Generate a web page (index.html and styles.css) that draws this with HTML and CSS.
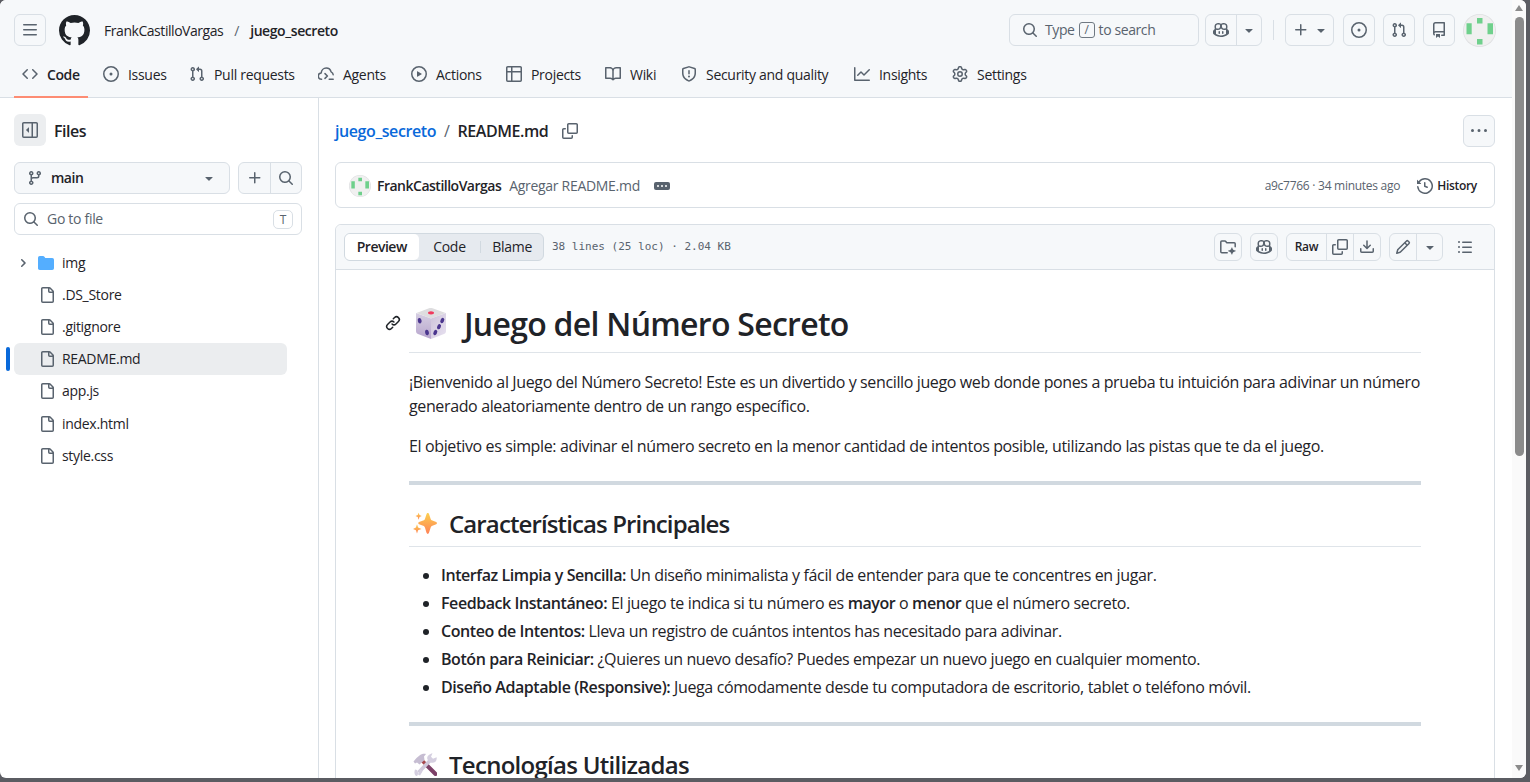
FILE: index.html
```html
<!DOCTYPE html>
<html lang="es">
<head>
  <meta charset="UTF-8">
  <meta name="viewport" content="width=device-width, initial-scale=1.0">
  <title>juego_secreto/README.md</title>
  <link rel="stylesheet" href="styles.css">
</head>
<body>

<!-- icon sprite -->
<svg class="sprite" xmlns="http://www.w3.org/2000/svg">
  <symbol id="i-menu" viewBox="0 0 16 16"><path d="M1 2.75A.75.75 0 0 1 1.75 2h12.5a.75.75 0 0 1 0 1.5H1.75A.75.75 0 0 1 1 2.75Zm0 5A.75.75 0 0 1 1.75 7h12.5a.75.75 0 0 1 0 1.5H1.75A.75.75 0 0 1 1 7.75ZM1.75 12h12.5a.75.75 0 0 1 0 1.5H1.75a.75.75 0 0 1 0-1.5Z"/></symbol>
  <symbol id="i-github" viewBox="0 0 16 16"><path d="M8 0c4.42 0 8 3.58 8 8a8.013 8.013 0 0 1-5.45 7.59c-.4.08-.55-.17-.55-.38 0-.27.01-1.13.01-2.2 0-.75-.25-1.23-.54-1.48 1.78-.2 3.65-.88 3.65-3.95 0-.88-.31-1.59-.82-2.15.08-.2.36-1.02-.08-2.12 0 0-.67-.22-2.2.82-.64-.18-1.32-.27-2-.27-.68 0-1.36.09-2 .27-1.53-1.03-2.2-.82-2.2-.82-.44 1.1-.16 1.92-.08 2.12-.51.56-.82 1.28-.82 2.15 0 3.06 1.86 3.75 3.64 3.95-.23.2-.44.55-.51 1.07-.46.21-1.61.55-2.33-.66-.15-.24-.6-.83-1.23-.82-.67.01-.27.38.01.53.34.19.73.9.82 1.13.16.45.68 1.31 2.69.94 0 .67.01 1.3.01 1.49 0 .21-.15.45-.55.38A7.995 7.995 0 0 1 0 8c0-4.42 3.58-8 8-8Z"/></symbol>
  <symbol id="i-code" viewBox="0 0 16 16"><path d="m11.28 3.22 4.25 4.25a.75.75 0 0 1 0 1.06l-4.25 4.25a.749.749 0 0 1-1.275-.326.749.749 0 0 1 .215-.734L13.94 8l-3.72-3.72a.749.749 0 0 1 .326-1.275.749.749 0 0 1 .734.215Zm-6.56 0a.751.751 0 0 1 1.042.018.751.751 0 0 1 .018 1.042L2.06 8l3.72 3.72a.749.749 0 0 1-.326 1.275.749.749 0 0 1-.734-.215L.47 8.53a.75.75 0 0 1 0-1.06Z"/></symbol>
  <symbol id="i-issue" viewBox="0 0 16 16"><path d="M8 9.5a1.5 1.5 0 1 0 0-3 1.5 1.5 0 0 0 0 3Z"/><path d="M8 0a8 8 0 1 1 0 16A8 8 0 0 1 8 0ZM1.5 8a6.5 6.5 0 1 0 13 0 6.5 6.5 0 0 0-13 0Z"/></symbol>
  <symbol id="i-pr" viewBox="0 0 16 16"><path d="M1.5 3.25a2.25 2.25 0 1 1 3 2.122v5.256a2.251 2.251 0 1 1-1.5 0V5.372A2.25 2.25 0 0 1 1.5 3.25Zm5.677-.177L9.573.677A.25.25 0 0 1 10 .854V2.5h1A2.5 2.5 0 0 1 13.5 5v5.628a2.251 2.251 0 1 1-1.5 0V5a1 1 0 0 0-1-1h-1v1.646a.25.25 0 0 1-.427.177L7.177 3.427a.25.25 0 0 1 0-.354ZM3.75 2.5a.75.75 0 1 0 0 1.5.75.75 0 0 0 0-1.5Zm0 9.5a.75.75 0 1 0 0 1.5.75.75 0 0 0 0-1.5Zm8.25.75a.75.75 0 1 0 1.5 0 .75.75 0 0 0-1.5 0Z"/></symbol>
  <symbol id="i-agents" viewBox="0 0 16 16"><path d="M3.6 13.2A3.1 3.1 0 0 1 3.2 7C3.4 4.2 5.5 2 8.2 2c2.4 0 4.3 1.6 4.9 3.9 1.2.5 2 1.5 2.1 2.9M7 7.6l2.4 2.4L7 12.4M11.2 13.2h4" fill="none" stroke="currentColor" stroke-width="1.5" stroke-linecap="round" stroke-linejoin="round"/></symbol>
  <symbol id="i-play" viewBox="0 0 16 16"><path d="M8 0a8 8 0 1 1 0 16A8 8 0 0 1 8 0ZM1.5 8a6.5 6.5 0 1 0 13 0 6.5 6.5 0 0 0-13 0Zm4.879-2.773 4.264 2.559a.25.25 0 0 1 0 .428l-4.264 2.559A.25.25 0 0 1 6 10.559V5.442a.25.25 0 0 1 .379-.215Z"/></symbol>
  <symbol id="i-table" viewBox="0 0 16 16"><path d="M0 1.75C0 .784.784 0 1.75 0h12.5C15.216 0 16 .784 16 1.75v12.5A1.75 1.75 0 0 1 14.25 16H1.75A1.75 1.75 0 0 1 0 14.25ZM6.5 6.5v8h7.75a.25.25 0 0 0 .25-.25V6.5Zm8-1.5V1.75a.25.25 0 0 0-.25-.25H6.5V5Zm-13 1.5v7.75c0 .138.112.25.25.25H5v-8ZM5 5V1.5H1.75a.25.25 0 0 0-.25.25V5Z"/></symbol>
  <symbol id="i-book" viewBox="0 0 16 16"><path d="M0 1.75A.75.75 0 0 1 .75 1h4.253c1.227 0 2.317.59 3 1.501A3.743 3.743 0 0 1 11.006 1h4.245a.75.75 0 0 1 .75.75v10.5a.75.75 0 0 1-.75.75h-4.507a2.25 2.25 0 0 0-1.591.659l-.622.621a.75.75 0 0 1-1.06 0l-.622-.621A2.25 2.25 0 0 0 5.258 13H.75a.75.75 0 0 1-.75-.75Zm7.251 10.324.004-5.073-.002-2.253A2.25 2.25 0 0 0 5.003 2.5H1.5v9h3.757a3.75 3.75 0 0 1 1.994.574ZM8.755 4.75l-.004 7.322a3.752 3.752 0 0 1 1.992-.572H14.5v-9h-3.495a2.25 2.25 0 0 0-2.25 2.25Z"/></symbol>
  <symbol id="i-shield" viewBox="0 0 16 16"><path d="M7.467.133a1.748 1.748 0 0 1 1.066 0l5.25 1.68A1.75 1.75 0 0 1 15 3.48V7c0 1.566-.32 3.182-1.303 4.682-.983 1.498-2.585 2.813-5.032 3.855a1.697 1.697 0 0 1-1.33 0c-2.447-1.042-4.049-2.357-5.032-3.855C1.32 10.182 1 8.566 1 7V3.48a1.75 1.75 0 0 1 1.217-1.667Zm.61 1.429a.25.25 0 0 0-.153 0l-5.25 1.68a.25.25 0 0 0-.174.238V7c0 1.358.275 2.666 1.057 3.86.784 1.194 2.121 2.34 4.366 3.297a.196.196 0 0 0 .154 0c2.245-.956 3.582-2.104 4.366-3.298C13.225 9.666 13.5 8.36 13.5 7V3.48a.251.251 0 0 0-.174-.237l-5.25-1.68ZM8.75 4.75v3a.75.75 0 0 1-1.5 0v-3a.75.75 0 0 1 1.5 0ZM9 10.5a1 1 0 1 1-2 0 1 1 0 0 1 2 0Z"/></symbol>
  <symbol id="i-graph" viewBox="0 0 16 16"><path d="M1.5 1.75V13.5h13.75a.75.75 0 0 1 0 1.5H.75a.75.75 0 0 1-.75-.75V1.75a.75.75 0 0 1 1.5 0Zm14.28 2.53-5.25 5.25a.75.75 0 0 1-1.06 0L7 7.06 4.28 9.78a.751.751 0 0 1-1.042-.018.751.751 0 0 1-.018-1.042l3.25-3.25a.75.75 0 0 1 1.06 0L10 7.94l4.72-4.72a.751.751 0 0 1 1.042.018.751.751 0 0 1 .018 1.042Z"/></symbol>
  <symbol id="i-gear" viewBox="0 0 16 16"><path d="M8 0a8.2 8.2 0 0 1 .701.031C9.444.095 9.99.645 10.16 1.29l.288 1.107c.018.066.079.158.212.224.231.114.454.243.668.386.123.082.233.09.299.071l1.103-.303c.644-.176 1.392.021 1.82.63.27.385.506.792.704 1.218.315.675.111 1.422-.364 1.891l-.814.806c-.049.048-.098.147-.088.294.016.257.016.515 0 .772-.01.147.038.246.088.294l.814.806c.475.469.679 1.216.364 1.891a7.977 7.977 0 0 1-.704 1.217c-.428.61-1.176.807-1.82.63l-1.102-.302c-.067-.019-.177-.011-.3.071a5.909 5.909 0 0 1-.668.386c-.133.066-.194.158-.211.224l-.29 1.106c-.168.646-.715 1.196-1.458 1.26a8.006 8.006 0 0 1-1.402 0c-.743-.064-1.289-.614-1.458-1.26l-.289-1.106c-.018-.066-.079-.158-.212-.224a5.738 5.738 0 0 1-.668-.386c-.123-.082-.233-.09-.299-.071l-1.103.303c-.644.176-1.392-.021-1.82-.63a8.12 8.12 0 0 1-.704-1.218c-.315-.675-.111-1.422.363-1.891l.815-.806c.05-.048.098-.147.088-.294a6.214 6.214 0 0 1 0-.772c.01-.147-.038-.246-.088-.294l-.815-.806C.635 6.045.431 5.298.746 4.623a7.92 7.92 0 0 1 .704-1.217c.428-.61 1.176-.807 1.82-.63l1.102.302c.067.019.177.011.3-.071.214-.143.437-.272.668-.386.133-.066.194-.158.211-.224l.29-1.106C6.009.645 6.556.095 7.299.03 7.53.01 7.764 0 8 0Zm-.571 1.525c-.036.003-.108.036-.137.146l-.289 1.105c-.147.561-.549.967-.998 1.189-.173.086-.34.183-.5.29-.417.278-.97.423-1.529.27l-1.103-.303c-.109-.03-.175.016-.195.045-.22.312-.412.644-.573.99-.014.031-.021.11.059.19l.815.806c.411.406.562.957.53 1.456a4.709 4.709 0 0 0 0 .582c.032.499-.119 1.05-.53 1.456l-.815.806c-.081.08-.073.159-.059.19.162.346.353.677.573.989.02.03.085.076.195.046l1.102-.303c.56-.153 1.113-.008 1.53.27.161.107.328.204.501.29.447.222.85.629.997 1.189l.289 1.105c.029.109.101.143.137.146a6.6 6.6 0 0 0 1.142 0c.036-.003.108-.036.137-.146l.289-1.105c.147-.561.549-.967.998-1.189.173-.086.34-.183.5-.29.417-.278.97-.423 1.529-.27l1.103.303c.109.029.175-.016.195-.045.22-.313.411-.644.573-.99.014-.031.021-.11-.059-.19l-.815-.806c-.411-.406-.562-.957-.53-1.456a4.709 4.709 0 0 0 0-.582c-.032-.499.119-1.05.53-1.456l.815-.806c.081-.08.073-.159.059-.19a6.464 6.464 0 0 0-.573-.989c-.02-.03-.085-.076-.195-.046l-1.102.303c-.56.153-1.113.008-1.53-.27a4.44 4.44 0 0 0-.501-.29c-.447-.222-.85-.629-.997-1.189l-.289-1.105c-.029-.11-.101-.143-.137-.146a6.6 6.6 0 0 0-1.142 0ZM11 8a3 3 0 1 1-6 0 3 3 0 0 1 6 0ZM9.5 8a1.5 1.5 0 1 0-3.001.001A1.5 1.5 0 0 0 9.5 8Z"/></symbol>
  <symbol id="i-search" viewBox="0 0 16 16"><path d="M10.68 11.74a6 6 0 0 1-7.922-8.982 6 6 0 0 1 8.982 7.922l3.04 3.04a.749.749 0 0 1-.326 1.275.749.749 0 0 1-.734-.215ZM11.5 7a4.499 4.499 0 1 0-8.997 0A4.499 4.499 0 0 0 11.5 7Z"/></symbol>
  <symbol id="i-copilot" viewBox="0 0 16 16"><path d="M7.998 15.035c-4.562 0-7.873-2.914-7.998-3.749V9.338c.085-.628.677-1.686 1.588-2.065.013-.07.024-.143.036-.218.029-.183.06-.384.126-.612-.201-.508-.254-1.084-.254-1.656 0-.87.128-1.769.693-2.484.579-.733 1.494-1.124 2.724-1.261 1.206-.134 2.262.034 2.944.765.05.053.096.108.139.165.044-.057.094-.112.143-.165.682-.731 1.738-.899 2.944-.765 1.23.137 2.145.528 2.724 1.261.566.715.693 1.614.693 2.484 0 .572-.053 1.148-.254 1.656.066.228.098.429.126.612.012.076.024.148.037.218.924.385 1.522 1.471 1.591 2.095v1.872c0 .766-3.351 3.795-8.002 3.795Zm0-1.485c2.28 0 4.584-1.11 5.002-1.433V7.862l-.023-.116c-.49.21-1.075.291-1.727.291-1.146 0-2.059-.327-2.71-.991A3.222 3.222 0 0 1 8 6.303a3.24 3.24 0 0 1-.544.743c-.65.664-1.563.991-2.71.991-.652 0-1.236-.081-1.727-.291l-.023.116v4.255c.419.323 2.722 1.433 5.002 1.433ZM6.762 2.83c-.193-.206-.637-.413-1.682-.297-1.019.113-1.479.404-1.713.7-.247.312-.369.789-.369 1.554 0 .793.129 1.171.308 1.371.162.181.519.379 1.442.379.853 0 1.339-.235 1.638-.54.315-.322.527-.827.617-1.553.117-.935-.037-1.395-.241-1.614Zm4.155-.297c-1.044-.116-1.488.091-1.681.297-.204.219-.359.679-.242 1.614.091.726.303 1.231.618 1.553.299.305.784.54 1.638.54.922 0 1.28-.198 1.442-.379.179-.2.308-.578.308-1.371 0-.765-.123-1.242-.37-1.554-.233-.296-.693-.587-1.713-.7Z"/><path d="M6.25 9.037a.75.75 0 0 1 .75.75v1.501a.75.75 0 0 1-1.5 0V9.787a.75.75 0 0 1 .75-.75Zm4.25.75v1.501a.75.75 0 0 1-1.5 0V9.787a.75.75 0 0 1 1.5 0Z"/></symbol>
  <symbol id="i-down" viewBox="0 0 16 16"><path d="m4.427 7.427 3.396 3.396a.25.25 0 0 0 .354 0l3.396-3.396A.25.25 0 0 0 11.396 7H4.604a.25.25 0 0 0-.177.427Z"/></symbol>
  <symbol id="i-plus" viewBox="0 0 16 16"><path d="M7.75 2a.75.75 0 0 1 .75.75V7h4.25a.75.75 0 0 1 0 1.5H8.5v4.25a.75.75 0 0 1-1.5 0V8.5H2.75a.75.75 0 0 1 0-1.5H7V2.75A.75.75 0 0 1 7.75 2Z"/></symbol>
  <symbol id="i-repo" viewBox="0 0 16 16"><path d="M2 2.5A2.5 2.5 0 0 1 4.5 0h8.75a.75.75 0 0 1 .75.75v12.5a.75.75 0 0 1-.75.75h-2.5a.75.75 0 0 1 0-1.5h1.75v-2h-8a1 1 0 0 0-.714 1.7.75.75 0 1 1-1.072 1.05A2.495 2.495 0 0 1 2 11.5Zm10.5-1h-8a1 1 0 0 0-1 1v6.708A2.486 2.486 0 0 1 4.5 9h8ZM5 12.25a.25.25 0 0 1 .25-.25h3.5a.25.25 0 0 1 .25.25v3.25a.25.25 0 0 1-.4.2l-1.45-1.087a.249.249 0 0 0-.3 0L5.4 15.7a.25.25 0 0 1-.4-.2Z"/></symbol>
  <symbol id="i-sidebar" viewBox="0 0 16 16"><path d="m4.177 7.823 2.396-2.396A.25.25 0 0 1 7 5.604v4.792a.25.25 0 0 1-.427.177L4.177 8.177a.25.25 0 0 1 0-.354Z"/><path d="M0 1.75C0 .784.784 0 1.75 0h12.5C15.216 0 16 .784 16 1.75v12.5A1.75 1.75 0 0 1 14.25 16H1.75A1.75 1.75 0 0 1 0 14.25Zm1.75-.25a.25.25 0 0 0-.25.25v12.5c0 .138.112.25.25.25H9.5v-13Zm12.5 13a.25.25 0 0 0 .25-.25V1.75a.25.25 0 0 0-.25-.25H11v13Z"/></symbol>
  <symbol id="i-branch" viewBox="0 0 16 16"><path d="M9.5 3.25a2.25 2.25 0 1 1 3 2.122V6A2.5 2.5 0 0 1 10 8.5H6a1 1 0 0 0-1 1v1.128a2.251 2.251 0 1 1-1.5 0V5.372a2.25 2.25 0 1 1 1.5 0v1.836A2.493 2.493 0 0 1 6 7h4a1 1 0 0 0 1-1v-.628A2.25 2.25 0 0 1 9.5 3.25Zm-6 0a.75.75 0 1 0 1.5 0 .75.75 0 0 0-1.5 0Zm8.25-.75a.75.75 0 1 0 0 1.5.75.75 0 0 0 0-1.5ZM4.25 12a.75.75 0 1 0 0 1.5.75.75 0 0 0 0-1.5Z"/></symbol>
  <symbol id="i-chevron" viewBox="0 0 12 12"><path d="M4.7 10c-.2 0-.4-.1-.5-.2-.3-.3-.3-.8 0-1.1L6.9 6 4.2 3.3c-.3-.3-.3-.8 0-1.1.3-.3.8-.3 1.1 0l3.3 3.2c.3.3.3.8 0 1.1L5.3 9.7c-.2.2-.4.3-.6.3Z"/></symbol>
  <symbol id="i-folder" viewBox="0 0 16 16"><path d="M1.75 1A1.75 1.75 0 0 0 0 2.75v10.5C0 14.216.784 15 1.75 15h12.5A1.75 1.75 0 0 0 16 13.25v-8.5A1.75 1.75 0 0 0 14.25 3H7.5a.25.25 0 0 1-.2-.1l-.9-1.2C6.07 1.26 5.55 1 5 1H1.75Z"/></symbol>
  <symbol id="i-file" viewBox="0 0 16 16"><path d="M2 1.75C2 .784 2.784 0 3.75 0h6.586c.464 0 .909.184 1.237.513l2.914 2.914c.329.328.513.773.513 1.237v9.586A1.75 1.75 0 0 1 13.25 16h-9.5A1.75 1.75 0 0 1 2 14.25Zm1.75-.25a.25.25 0 0 0-.25.25v12.5c0 .138.112.25.25.25h9.5a.25.25 0 0 0 .25-.25V6h-2.75A1.75 1.75 0 0 1 9 4.25V1.5Zm6.75.062V4.25c0 .138.112.25.25.25h2.688l-.011-.013-2.914-2.914-.013-.011Z"/></symbol>
  <symbol id="i-copy" viewBox="0 0 16 16"><path d="M0 6.75C0 5.784.784 5 1.75 5h1.5a.75.75 0 0 1 0 1.5h-1.5a.25.25 0 0 0-.25.25v7.5c0 .138.112.25.25.25h7.5a.25.25 0 0 0 .25-.25v-1.5a.75.75 0 0 1 1.5 0v1.5A1.75 1.75 0 0 1 9.25 16h-7.5A1.75 1.75 0 0 1 0 14.25Z"/><path d="M5 1.75C5 .784 5.784 0 6.75 0h7.5C15.216 0 16 .784 16 1.75v7.5A1.75 1.75 0 0 1 14.25 11h-7.5A1.75 1.75 0 0 1 5 9.25Zm1.75-.25a.25.25 0 0 0-.25.25v7.5c0 .138.112.25.25.25h7.5a.25.25 0 0 0 .25-.25v-7.5a.25.25 0 0 0-.25-.25Z"/></symbol>
  <symbol id="i-kebab" viewBox="0 0 16 16"><path d="M8 9a1.5 1.5 0 1 0 0-3 1.5 1.5 0 0 0 0 3ZM1.5 9a1.5 1.5 0 1 0 0-3 1.5 1.5 0 0 0 0 3Zm13 0a1.5 1.5 0 1 0 0-3 1.5 1.5 0 0 0 0 3Z"/></symbol>
  <symbol id="i-history" viewBox="0 0 16 16"><path d="m.427 1.927 1.215 1.215a8.002 8.002 0 1 1-1.6 5.685.75.75 0 1 1 1.493-.154 6.5 6.5 0 1 0 1.18-4.458l1.358 1.358A.25.25 0 0 1 3.896 6H.25A.25.25 0 0 1 0 5.75V2.104a.25.25 0 0 1 .427-.177ZM7.75 4a.75.75 0 0 1 .75.75v2.992l2.028.812a.75.75 0 0 1-.557 1.392l-2.5-1A.751.751 0 0 1 7 8.25v-3.5A.75.75 0 0 1 7.75 4Z"/></symbol>
  <symbol id="i-space" viewBox="0 0 16 16"><path d="M7.2 13.8H1.8c-.6 0-1-.4-1-1V3c0-.6.4-1 1-1h3.1c.4 0 .7.2.9.5l.8 1.2h7.6c.6 0 1 .4 1 1v3" fill="none" stroke="currentColor" stroke-width="1.5" stroke-linecap="round" stroke-linejoin="round"/><path d="M12.2 8.4c.5 2 1.2 2.7 3.4 3.2v.6c-2.2.5-2.9 1.2-3.4 3.4h-.6c-.5-2.2-1.2-2.9-3.4-3.4v-.6c2.2-.5 2.9-1.2 3.4-3.2z"/></symbol>
  <symbol id="i-download" viewBox="0 0 16 16"><path d="M2.75 14A1.75 1.75 0 0 1 1 12.25v-2.5a.75.75 0 0 1 1.5 0v2.5c0 .138.112.25.25.25h10.5a.25.25 0 0 0 .25-.25v-2.5a.75.75 0 0 1 1.5 0v2.5A1.75 1.75 0 0 1 13.25 14Z"/><path d="M7.25 7.689V2a.75.75 0 0 1 1.5 0v5.689l1.97-1.969a.749.749 0 1 1 1.06 1.06l-3.25 3.25a.749.749 0 0 1-1.06 0L4.22 6.78a.749.749 0 1 1 1.06-1.06l1.97 1.969Z"/></symbol>
  <symbol id="i-pencil" viewBox="0 0 16 16"><path d="M11.013 1.427a1.75 1.75 0 0 1 2.474 0l1.086 1.086a1.75 1.75 0 0 1 0 2.474l-8.61 8.61c-.21.21-.47.364-.756.445l-3.251.93a.75.75 0 0 1-.927-.928l.929-3.25c.081-.286.235-.547.445-.758l8.61-8.61Zm.176 4.823L9.75 4.81l-6.286 6.287a.253.253 0 0 0-.064.108l-.558 1.953 1.953-.558a.253.253 0 0 0 .108-.064Zm1.238-3.763a.25.25 0 0 0-.354 0L10.811 3.75l1.439 1.44 1.263-1.263a.25.25 0 0 0 0-.354Z"/></symbol>
  <symbol id="i-list" viewBox="0 0 16 16"><path d="M5.75 2.5h8.5a.75.75 0 0 1 0 1.5h-8.5a.75.75 0 0 1 0-1.5Zm0 5h8.5a.75.75 0 0 1 0 1.5h-8.5a.75.75 0 0 1 0-1.5Zm0 5h8.5a.75.75 0 0 1 0 1.5h-8.5a.75.75 0 0 1 0-1.5ZM2 14a1 1 0 1 1 0-2 1 1 0 0 1 0 2Zm1-6a1 1 0 1 1-2 0 1 1 0 0 1 2 0ZM2 4a1 1 0 1 1 0-2 1 1 0 0 1 0 2Z"/></symbol>
  <symbol id="i-link" viewBox="0 0 16 16"><path d="m7.775 3.275 1.25-1.25a3.5 3.5 0 1 1 4.95 4.95l-2.5 2.5a3.5 3.5 0 0 1-4.95 0 .751.751 0 0 1 .018-1.042.751.751 0 0 1 1.042-.018 1.998 1.998 0 0 0 2.83 0l2.5-2.5a2.002 2.002 0 0 0-2.83-2.83l-1.25 1.25a.751.751 0 0 1-1.042-.018.751.751 0 0 1-.018-1.042Zm-4.69 9.64a1.998 1.998 0 0 0 2.83 0l1.25-1.25a.751.751 0 0 1 1.042.018.751.751 0 0 1 .018 1.042l-1.25 1.25a3.5 3.5 0 1 1-4.95-4.95l2.5-2.5a3.5 3.5 0 0 1 4.95 0 .751.751 0 0 1-.018 1.042.751.751 0 0 1-1.042.018 1.998 1.998 0 0 0-2.83 0l-2.5 2.5a1.998 1.998 0 0 0 0 2.83Z"/></symbol>
  <symbol id="i-avatar" viewBox="0 0 33 33"><circle cx="16.5" cy="16.5" r="16.5" fill="#dfe0e2"/><circle cx="16.5" cy="16.5" r="15.7" fill="#f0f0f0"/><path d="M14 4h5.5v5.5H14zM14 25h5.500v5.500H14zM3.500 9.300h5.200v11H3.500zM24.500 9.300h5.500v11h-5.500z" fill="#6fd08c"/></symbol>
</svg>

<div class="window">
  <div class="page">
    <header class="header">
      <div class="topbar">
        <button class="btn square menu"><svg class="icon"><use href="#i-menu"/></svg></button>
        <svg class="logo"><use href="#i-github"/></svg>
        <div class="context">
          <span class="owner">FrankCastilloVargas</span>
          <span class="slash">/</span>
          <b class="repo">juego_secreto</b>
        </div>
        <div class="actions">
          <div class="btn searchbox">
            <svg class="icon"><use href="#i-search"/></svg>
            <span>Type</span><kbd>/</kbd><span>to search</span>
          </div>
          <div class="btn split copilot">
            <span><svg class="icon"><use href="#i-copilot"/></svg></span>
            <span><svg class="icon"><use href="#i-down"/></svg></span>
          </div>
          <i class="divider"></i>
          <button class="btn create"><svg class="icon"><use href="#i-plus"/></svg><svg class="icon"><use href="#i-down"/></svg></button>
          <button class="btn square"><svg class="icon"><use href="#i-issue"/></svg></button>
          <button class="btn square"><svg class="icon"><use href="#i-pr"/></svg></button>
          <button class="btn square"><svg class="icon"><use href="#i-repo"/></svg></button>
          <svg class="avatar"><use href="#i-avatar"/></svg>
        </div>
      </div>
      <nav class="tabs">
        <a class="tab active"><svg class="icon"><use href="#i-code"/></svg><span>Code</span></a>
        <a class="tab"><svg class="icon"><use href="#i-issue"/></svg><span>Issues</span></a>
        <a class="tab"><svg class="icon"><use href="#i-pr"/></svg><span>Pull requests</span></a>
        <a class="tab"><svg class="icon"><use href="#i-agents"/></svg><span>Agents</span></a>
        <a class="tab"><svg class="icon"><use href="#i-play"/></svg><span>Actions</span></a>
        <a class="tab"><svg class="icon"><use href="#i-table"/></svg><span>Projects</span></a>
        <a class="tab"><svg class="icon"><use href="#i-book"/></svg><span>Wiki</span></a>
        <a class="tab"><svg class="icon"><use href="#i-shield"/></svg><span>Security and quality</span></a>
        <a class="tab"><svg class="icon"><use href="#i-graph"/></svg><span>Insights</span></a>
        <a class="tab"><svg class="icon"><use href="#i-gear"/></svg><span>Settings</span></a>
      </nav>
    </header>

    <div class="layout">
      <aside class="sidebar">
        <div class="files-head">
          <button class="collapse"><svg class="icon"><use href="#i-sidebar"/></svg></button>
          <h2>Files</h2>
        </div>
        <div class="branch-row">
          <button class="btn branch">
            <svg class="icon"><use href="#i-branch"/></svg>
            <b>main</b>
            <svg class="icon caret"><use href="#i-down"/></svg>
          </button>
          <div class="btn split">
            <span><svg class="icon"><use href="#i-plus"/></svg></span>
            <span><svg class="icon"><use href="#i-search"/></svg></span>
          </div>
        </div>
        <div class="goto">
          <svg class="icon"><use href="#i-search"/></svg>
          <span>Go to file</span>
          <kbd>T</kbd>
        </div>
        <ul class="tree">
          <li class="folder"><svg class="chev"><use href="#i-chevron"/></svg><svg class="icon blue"><use href="#i-folder"/></svg>img</li>
          <li><svg class="icon"><use href="#i-file"/></svg>.DS_Store</li>
          <li><svg class="icon"><use href="#i-file"/></svg>.gitignore</li>
          <li class="current"><svg class="icon"><use href="#i-file"/></svg>README.md</li>
          <li><svg class="icon"><use href="#i-file"/></svg>app.js</li>
          <li><svg class="icon"><use href="#i-file"/></svg>index.html</li>
          <li><svg class="icon"><use href="#i-file"/></svg>style.css</li>
        </ul>
      </aside>

      <main class="main">
        <div class="crumbs">
          <a class="crumb-repo">juego_secreto</a>
          <span class="crumb-slash">/</span>
          <b class="crumb-file">README.md</b>
          <svg class="icon"><use href="#i-copy"/></svg>
          <button class="btn square more"><svg class="icon"><use href="#i-kebab"/></svg></button>
        </div>

        <div class="commit">
          <svg class="avatar small"><use href="#i-avatar"/></svg>
          <b class="author">FrankCastilloVargas</b>
          <span class="message">Agregar README.md</span>
          <span class="ellipsis"><i></i><i></i><i></i></span>
          <span class="when">a9c7766 · 34 minutes ago</span>
          <svg class="icon"><use href="#i-history"/></svg>
          <b class="history">History</b>
        </div>

        <div class="filebox">
          <div class="toolbar">
            <div class="segmented">
              <span class="seg on">Preview</span>
              <span class="seg code">Code</span>
              <span class="seg blame">Blame</span>
            </div>
            <span class="meta">38 lines (25 loc) · 2.04 KB</span>
            <div class="tools">
              <button class="btn tool"><svg class="icon"><use href="#i-space"/></svg></button>
              <button class="btn tool"><svg class="icon"><use href="#i-copilot"/></svg></button>
              <div class="btn split raw">
                <span><b>Raw</b></span>
                <span><svg class="icon"><use href="#i-copy"/></svg></span>
                <span><svg class="icon"><use href="#i-download"/></svg></span>
              </div>
              <div class="btn split edit">
                <span><svg class="icon"><use href="#i-pencil"/></svg></span>
                <span><svg class="icon"><use href="#i-down"/></svg></span>
              </div>
              <svg class="icon outline"><use href="#i-list"/></svg>
            </div>
          </div>

          <article class="readme">
            <h1>
              <svg class="icon anchor"><use href="#i-link"/></svg>
              <svg class="dice" viewBox="0 0 32 32">
                <defs>
                  <linearGradient id="dl" x1="0" y1="0" x2="0" y2="1"><stop offset="0" stop-color="#d6cfe2"/><stop offset="1" stop-color="#b7a5cd"/></linearGradient>
                  <linearGradient id="dr" x1="0" y1="0" x2="1" y2="1"><stop offset="0" stop-color="#cdc2d9"/><stop offset="1" stop-color="#e8e2f1"/></linearGradient>
                </defs>
                <path d="M1.5 5.500 14 .8c1.200-.5 2.400-.5 3.600 0l13 4.700-14.600 5.500z" fill="#dedddf"/>
                <path d="M1 5.500 16 11v20.500L3 26.500C1.500 25.900 1 25 1 23.500z" fill="url(#dl)"/>
                <path d="M31 5.500 16 11v20.500l13-5c1.500-.7 2-1.500 2-3z" fill="url(#dr)"/>
                <ellipse cx="16" cy="5.300" rx="3" ry="1.600" fill="#f0395c"/>
                <g fill="#4b368e">
                  <ellipse cx="4.700" cy="13.300" rx="1.900" ry="2.800" transform="rotate(-15 4.700 13.300)"/>
                  <ellipse cx="12" cy="25" rx="1.900" ry="2.800" transform="rotate(-15 12 25)"/>
                  <ellipse cx="27.300" cy="13" rx="1.800" ry="2.700" transform="rotate(25 27.300 13)"/>
                  <ellipse cx="24" cy="19.200" rx="1.800" ry="2.700" transform="rotate(25 24 19.200)"/>
                  <ellipse cx="20.300" cy="25" rx="1.800" ry="2.700" transform="rotate(25 20.300 25)"/>
                </g>
              </svg>
              <span>Juego del Número Secreto</span>
            </h1>
            <p>¡Bienvenido al Juego del Número Secreto! Este es un divertido y sencillo juego web donde pones a prueba tu intuición para adivinar un número<br>generado aleatoriamente dentro de un rango específico.</p>
            <p>El objetivo es simple: adivinar el número secreto en la menor cantidad de intentos posible, utilizando las pistas que te da el juego.</p>
            <hr>
            <h2>
              <svg class="emoji" viewBox="0 0 24 24">
                <defs><linearGradient id="sp" x1="0" y1="0" x2="0" y2="1"><stop offset="0" stop-color="#fcd04f"/><stop offset="1" stop-color="#ff8257"/></linearGradient></defs>
                <g fill="url(#sp)">
                  <path d="M14.800 1c.6 0 1 .3 1.300 1.200l1.500 4.500c.4 1 .8 1.500 1.800 1.900l3.800 1.500c1 .5 1 1.700 0 2.200L19.400 13.800c-1 .4-1.400.9-1.800 1.900L16 20.800c-.5 1.500-2 1.500-2.500 0L12 15.700c-.4-1-.8-1.500-1.800-1.900L6 12.300c-1-.5-1-1.700 0-2.200l4.200-1.500c1-.4 1.400-.9 1.800-1.900l1.500-4.500c.3-.9.700-1.200 1.300-1.200z"/>
                  <path d="M5.600.8 6.500 3l2.300 1-2.300 1-.9 2.800L4.700 5l-2.200-1 2.200-1z"/>
                  <path d="M4 12.200l1.100 3.400 3.400 1.300-3.400 1.300L4 21.600l-1.100-3.400L0 16.900l2.900-1.300z"/>
                </g>
              </svg>
              <span>Características Principales</span>
            </h2>
            <ul class="features">
              <li><b>Interfaz Limpia y Sencilla:</b> Un diseño minimalista y fácil de entender para que te concentres en jugar.</li>
              <li><b>Feedback Instantáneo:</b> El juego te indica si tu número es <b>mayor</b> o <b>menor</b> que el número secreto.</li>
              <li><b>Conteo de Intentos:</b> Lleva un registro de cuántos intentos has necesitado para adivinar.</li>
              <li><b>Botón para Reiniciar:</b> ¿Quieres un nuevo desafío? Puedes empezar un nuevo juego en cualquier momento.</li>
              <li><b>Diseño Adaptable (Responsive):</b> Juega cómodamente desde tu computadora de escritorio, tablet o teléfono móvil.</li>
            </ul>
            <hr>
            <h2 class="tech">
              <svg class="emoji" viewBox="0 0 24 24">
                <path d="M14 12.500 22.500 21" stroke="#7d4168" stroke-width="4" stroke-linecap="round"/>
                <path d="M8.500 7 14 12.500" stroke="#a7484d" stroke-width="3.500"/>
                <path d="M5.500 19.500 18.500 6" stroke="#cfc8da" stroke-width="3.600"/>
                <path d="M17.500.900a5 5 0 0 1 2-.6L18 3.800l2 2 3.600-1.500c.8 4-2.700 6.500-6.100 5.100l-3-3C13.500 4 15 1.900 17.500.900zM2 16.500l2 .6 1.300 3.300-1.200 2.600c-2 .3-3.600-3-2.100-6.500zM7.500 16l2 2.500-2.500 4-2-1z" fill="#d5cfe0"/>
                <path d="M.500 8.500 3.500 5 6.500 2.500C8 1 11 .5 13 1l-2 2.500.5 3.500L6.500 11.500 4 9.500 2 10.500z" fill="#c6bdd2"/>
              </svg>
              <span>Tecnologías Utilizadas</span>
            </h2>
          </article>
        </div>
      </main>
    </div>
  </div>

  <div class="scrollbar">
    <i class="arrow up"></i>
    <div class="thumb"></div>
    <i class="arrow dn"></i>
  </div>
</div>

</body>
</html>
```
FILE: styles.css
```css
* {
  box-sizing: border-box;
}

body {
  margin: 0;
  height: 782px;
  overflow: hidden;
  background: #5b5c62;
  color: #1f2328;
  font-family: "Open Sans", "Noto Sans", sans-serif;
  font-size: 14px;
  line-height: 20px;
  letter-spacing: -0.3px;
}

b, h1, h2 {
  font-weight: 600;
}

button {
  font: inherit;
  letter-spacing: inherit;
  color: inherit;
  padding: 0;
}

.sprite {
  display: none;
}

.window {
  display: flex;
  width: 1526px;
  height: 778px;
  background: #fff;
  border-radius: 6px;
  overflow: hidden;
}

.page {
  width: 1512px;
  height: 778px;
  overflow: hidden;
}

.icon {
  width: 16px;
  height: 16px;
  flex: none;
  fill: currentColor;
  color: #59636e;
}

.btn {
  display: flex;
  align-items: center;
  justify-content: center;
  height: 32px;
  border: 1px solid #d9dfe5;
  border-radius: 6px;
  background: #f6f8fa;
}

.square {
  width: 32px;
}

.split span {
  display: flex;
  align-items: center;
  justify-content: center;
  width: 31px;
  height: 100%;
}

.split span + span {
  border-left: 1px solid #d9dfe5;
}

/* header */
.header {
  height: 98px;
  background: #f6f8fa;
  border-bottom: 1px solid #d9dfe5;
}

.topbar {
  display: flex;
  align-items: center;
  height: 60px;
  padding: 0 16px 0 14px;
}

.logo {
  width: 31px;
  height: 31px;
  margin-left: 13px;
  fill: #1f2328;
}

.context {
  display: flex;
  margin-left: 14px;
  padding-top: 1px;
}

.owner {
  letter-spacing: -0.45px;
}

.repo {
  letter-spacing: -0.42px;
}

.slash {
  margin: 0 11px;
  color: #59636e;
}

.actions {
  display: flex;
  align-items: center;
  margin-left: auto;
}

.actions .square {
  margin-right: 8px;
}

.searchbox {
  width: 190px;
  justify-content: flex-start;
  padding-left: 12px;
  color: #59636e;
  letter-spacing: -0.4px;
}

.searchbox .icon {
  margin-right: 7px;
}

kbd {
  font: inherit;
}

.searchbox kbd {
  width: 16px;
  height: 16px;
  margin: 0 4px;
  border: 1px solid #6f7882;
  border-radius: 3px;
  line-height: 14px;
  font-size: 12px;
  text-align: center;
}

.copilot {
  width: 57px;
  margin-left: 6px;
}

.copilot span:first-child {
  width: 30px;
}

.copilot span + span {
  width: 25px;
}

.divider {
  width: 1px;
  height: 20px;
  margin: 0 11px;
  background: #d9dfe5;
}

.create {
  width: 49px;
  gap: 4px;
  margin-right: 9px;
  padding-left: 2px;
}

.avatar {
  width: 33px;
  height: 33px;
  flex: none;
}

.tabs {
  display: grid;
  grid-template-columns: 81px 86px 129px 93px 95px 99px 76px 173px 98px 98px;
  height: 38px;
  padding-left: 14px;
}

.tab {
  display: flex;
  padding: 6px 0 0 8px;
  gap: 9px;
  height: 38px;
  line-height: 17px;
  white-space: nowrap;
}

.tab.active {
  width: 74px;
  font-weight: 600;
  letter-spacing: -0.4px;
  border-bottom: 2px solid #fd8c73;
}

/* sidebar */
.layout {
  display: flex;
  height: 680px;
}

.sidebar {
  width: 319px;
  padding: 16px 16px 0 14px;
  border-right: 1px solid #d9dfe5;
}

.files-head {
  display: flex;
  align-items: center;
  gap: 8px;
  height: 32px;
}

.files-head h2 {
  margin: 0;
  padding-top: 2px;
  font-size: 16px;
  letter-spacing: -0.5px;
}

.collapse {
  display: flex;
  align-items: center;
  justify-content: center;
  width: 32px;
  height: 32px;
  border: 0;
  border-radius: 6px;
  background: #eceef0;
}

.branch-row {
  display: flex;
  gap: 8px;
  margin-top: 16px;
}

.branch {
  width: 216px;
  justify-content: flex-start;
  padding: 0 12px;
}

.branch b {
  margin-left: 8px;
  letter-spacing: -0.5px;
}

.caret {
  margin-left: auto;
}

.goto {
  display: flex;
  align-items: center;
  width: 288px;
  height: 32px;
  margin-top: 9px;
  padding: 0 8px;
  border: 1px solid #d9dfe5;
  border-radius: 6px;
  color: #59636e;
}

.goto span {
  margin-left: 8px;
}

.goto kbd {
  width: 20px;
  height: 19px;
  margin-left: auto;
  border: 1px solid #d9dfe5;
  border-radius: 5px;
  font-size: 12px;
  line-height: 17px;
  text-align: center;
}

.tree {
  list-style: none;
  margin: 12px 0 0;
  padding: 0;
  width: 273px;
}

.tree li {
  position: relative;
  display: flex;
  align-items: center;
  height: 32.1px;
  padding-left: 25px;
  border-radius: 6px;
}

.tree .icon {
  margin-right: 7px;
}

.tree .folder {
  padding-left: 3px;
}

.chev {
  width: 12px;
  height: 12px;
  margin-right: 9px;
  fill: #59636e;
}

.tree .blue {
  margin-right: 8px;
  color: #54aeff;
}

.tree .current {
  background: #ebedef;
}

.current::before {
  content: "";
  position: absolute;
  left: -8px;
  top: 4px;
  width: 4px;
  height: 24px;
  border-radius: 3px;
  background: #0969da;
}

/* main column */
.main {
  flex: 1;
  padding: 16px 17px 0 16px;
}

.crumbs {
  display: flex;
  align-items: center;
  height: 33px;
  font-size: 16px;
  letter-spacing: -0.42px;
}

.crumb-repo {
  color: #0969da;
  font-weight: 600;
}

.crumb-slash {
  margin: 0 8px;
  color: #59636e;
}

.crumbs > .icon {
  margin-left: 14px;
}

.more {
  margin-left: auto;
}

.commit {
  display: flex;
  align-items: center;
  height: 46px;
  margin-top: 15px;
  padding: 1px 17px 0 13px;
  border: 1px solid #d9dfe5;
  border-radius: 6px;
}

.small {
  width: 22px;
  height: 22px;
  margin-right: 6px;
}

.author {
  letter-spacing: -0.5px;
}

.message {
  margin-left: 8px;
  color: #59636e;
}

.ellipsis {
  display: flex;
  align-items: center;
  justify-content: center;
  gap: 2px;
  width: 16px;
  height: 8px;
  margin-left: 14px;
  border-radius: 2px;
  background: #59636e;
}

.ellipsis i {
  width: 2px;
  height: 2px;
  border-radius: 50%;
  background: #fff;
}

.when {
  margin-left: auto;
  margin-right: 17px;
  font-size: 12px;
  letter-spacing: -0.27px;
  color: #59636e;
}

.history {
  margin-left: 4px;
  font-size: 12px;
}

.filebox {
  height: 600px;
  margin-top: 16px;
  border: 1px solid #d9dfe5;
  border-radius: 6px 6px 0 0;
}

.toolbar {
  display: flex;
  align-items: center;
  height: 45px;
  padding: 0 20px 0 8px;
  background: #f6f8fa;
  border-bottom: 1px solid #d9dfe5;
  border-radius: 6px 6px 0 0;
}

.segmented {
  display: flex;
  width: 200px;
  height: 28px;
  border: 1px solid #d1d9e0;
  border-radius: 6px;
  background: #e6eaef;
  line-height: 26px;
  text-align: center;
}

.on {
  width: 74px;
  background: #fff;
  border-radius: 5px;
  font-weight: 600;
  letter-spacing: -0.5px;
}

.code {
  width: 62px;
}

.blame {
  width: 63px;
  height: 12px;
  margin-top: 7px;
  border-left: 1px solid #d1d9e0;
  line-height: 12px;
}

.meta {
  margin-left: 8px;
  font-family: "DejaVu Sans Mono", monospace;
  font-size: 11px;
  letter-spacing: 0;
  color: #59636e;
}

.tools {
  display: flex;
  align-items: center;
  margin-left: auto;
  gap: 8px;
}

.tools .btn {
  height: 28px;
}

.tool {
  width: 28px;
}

.raw span {
  width: 27px;
}

.raw span:first-child {
  width: 39px;
  font-size: 12px;
}

.edit span {
  width: 26px;
}

.outline {
  margin: 0 1px 0 6px;
}

/* readme */
.readme {
  width: 1012px;
  margin: 0 auto;
  padding-top: 33px;
  font-size: 16px;
  line-height: 24px;
  letter-spacing: -0.37px;
}

.readme p {
  margin: 0 0 16px;
  white-space: nowrap;
}

.readme h1 {
  position: relative;
  display: flex;
  align-items: center;
  height: 50px;
  margin: 0 0 17px;
  padding: 0 0 8px 6px;
  border-bottom: 1px solid #dfe4e9;
  font-size: 32px;
  line-height: 40px;
  letter-spacing: -0.72px;
}

.anchor {
  position: absolute;
  left: -24px;
  top: 12px;
  color: #1f2328;
}

.dice {
  width: 32px;
  height: 33px;
  margin-right: 17px;
}

.readme h2 {
  display: flex;
  align-items: center;
  height: 37px;
  margin: 24px 0 16px;
  padding: 0 0 8px 4px;
  border-bottom: 1px solid #dfe4e9;
  font-size: 24px;
  line-height: 30px;
  letter-spacing: -0.88px;
}

.readme .tech {
  letter-spacing: -0.72px;
}

.emoji {
  width: 24px;
  height: 24px;
  margin-right: 12px;
  fill: none;
}

.readme hr {
  height: 4px;
  margin: 23px 0 25px;
  border: 0;
  background: #d1d9e0;
}

.features {
  margin: 0;
  padding-left: 32px;
}

.features li {
  white-space: nowrap;
}

.features li + li {
  margin-top: 4px;
}

.features b {
  letter-spacing: -0.43px;
}

/* window scrollbar */
.scrollbar {
  display: flex;
  flex-direction: column;
  align-items: center;
  width: 14px;
  padding: 5px 0 7px;
  background: #fafafa;
}

.thumb {
  width: 9px;
  height: 439px;
  margin-top: 6px;
  border-radius: 5px;
  background: #8b8b8b;
}

.arrow {
  border: 4px solid transparent;
}

.up {
  border-top: 0;
  border-bottom: 6px solid #8b8b8b;
}

.dn {
  margin-top: auto;
  border-bottom: 0;
  border-top: 6px solid #8b8b8b;
}
```
